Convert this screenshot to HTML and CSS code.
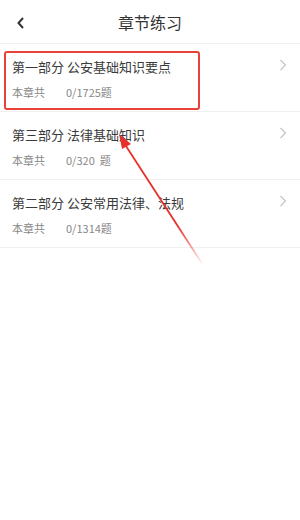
FILE: index.html
```html
<!DOCTYPE html>
<html lang="zh">
<head>
    <meta charset="UTF-8">
    <title>章节练习</title>
    <link rel="stylesheet" href="styles.css">
</head>
<body>
<div class="page">
    <div class="header">
        <span class="back">
            <svg width="10" height="14" viewBox="0 0 10 14"><path d="M7 2 L2.5 7 L7 12" fill="none" stroke="#333" stroke-width="2"/></svg>
        </span>
        <span class="title">章节练习</span>
    </div>
    <ul class="list">
        <li class="item">
            <div class="item-top">
                <span class="name">第一部分 公安基础知识要点</span>
                <svg class="arrow-r" width="8" height="12" viewBox="0 0 8 12"><path d="M1.5 1 L6.5 6 L1.5 11" fill="none" stroke="#c4c4c4" stroke-width="1.2"/></svg>
            </div>
            <div class="sub"><span class="label">本章共</span><span>0/1725题</span></div>
        </li>
        <li class="item">
            <div class="item-top">
                <span class="name">第三部分 法律基础知识</span>
                <svg class="arrow-r" width="8" height="12" viewBox="0 0 8 12"><path d="M1.5 1 L6.5 6 L1.5 11" fill="none" stroke="#c4c4c4" stroke-width="1.2"/></svg>
            </div>
            <div class="sub"><span class="label">本章共</span><span>0/320&nbsp; 题</span></div>
        </li>
        <li class="item">
            <div class="item-top">
                <span class="name">第二部分 公安常用法律、法规</span>
                <svg class="arrow-r" width="8" height="12" viewBox="0 0 8 12"><path d="M1.5 1 L6.5 6 L1.5 11" fill="none" stroke="#c4c4c4" stroke-width="1.2"/></svg>
            </div>
            <div class="sub"><span class="label">本章共</span><span>0/1314题</span></div>
        </li>
    </ul>

    <!-- 标注 -->
    <div class="mark-box"></div>
    <svg class="mark-arrow" width="300" height="520" viewBox="0 0 300 520">
        <defs>
            <linearGradient id="fade" x1="120" y1="136" x2="203" y2="265" gradientUnits="userSpaceOnUse">
                <stop offset="0" stop-color="#e8302a"/>
                <stop offset="0.7" stop-color="#e8302a"/>
                <stop offset="1" stop-color="#e8302a" stop-opacity="0"/>
            </linearGradient>
        </defs>
        <line x1="124" y1="143" x2="203" y2="265" stroke="url(#fade)" stroke-width="1.8"/>
        <polygon points="119,134 131,144 122,149" fill="#e8302a"/>
    </svg>
</div>
</body>
</html>
```

FILE: styles.css
```css
* {
    padding: 0;
    margin: 0;
}

body {
    background: #fff;
    font-family: "Noto Sans CJK SC", "Noto Sans", sans-serif;
    color: #333;
}

.page {
    position: relative;
    width: 300px;
    height: 520px;
    overflow: hidden;
}

.header {
    height: 44px;
    border-bottom: 1px solid #f0f0f0;
    box-sizing: border-box;
    display: flex;
    align-items: center;
    justify-content: center;
    position: relative;
}

.back {
    position: absolute;
    left: 16px;
    top: 16px;
    display: flex;
}

.title {
    font-size: 16px;
    color: #333;
}

.list {
    list-style: none;
}

.item {
    height: 68px;
    box-sizing: border-box;
    padding: 12px 12px 0 12px;
    border-bottom: 1px solid #f0f0f0;
}

.item-top {
    display: flex;
    align-items: center;
    justify-content: space-between;
    height: 20px;
}

.name {
    font-size: 13px;
    color: #3a3a3a;
}

.arrow-r {
    margin-right: 1px;
    margin-top: -3px;
}

.sub {
    margin-top: 8px;
    font-size: 11px;
    line-height: 16px;
    color: #888;
    display: flex;
}

.label {
    width: 54px;
}

.mark-box {
    position: absolute;
    left: 4px;
    top: 51px;
    width: 196px;
    height: 59px;
    box-sizing: border-box;
    border: 2px solid #e8413a;
    border-radius: 3px;
}

.mark-arrow {
    position: absolute;
    left: 0;
    top: 0;
}
```
